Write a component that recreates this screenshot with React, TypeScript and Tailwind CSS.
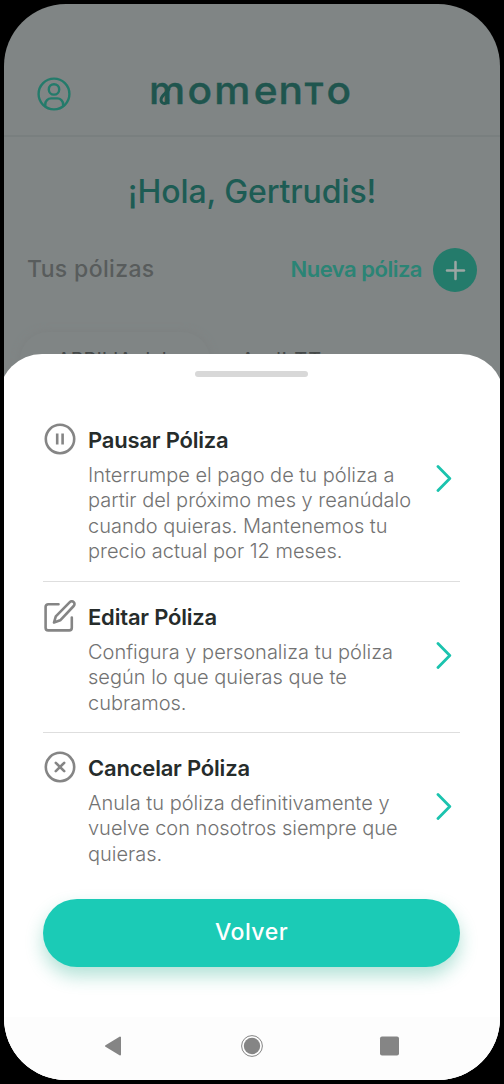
import type { ReactNode } from 'react';
import { Plus } from 'lucide-react';

interface PolicyAction {
  id: string;
  title: string;
  lines: string[];
  icon: ReactNode;
  className: string;
}

const iconProps = {
  width: 32,
  height: 32,
  viewBox: '0 0 32 32',
  fill: 'none',
  stroke: '#858585',
  strokeWidth: 2.6,
  strokeLinecap: 'round' as const,
  strokeLinejoin: 'round' as const,
};

const PauseIcon = () => (
  <svg {...iconProps}>
    <circle cx="16" cy="16" r="14.2" />
    <path d="M13.2 10.6v10.8M18.6 10.6v10.8" strokeLinecap="butt" />
  </svg>
);

const EditIcon = () => (
  <svg {...iconProps}>
    <path d="M14.5 4.2H4.2a2.6 2.6 0 0 0-2.6 2.6v21a2.6 2.6 0 0 0 2.6 2.6h21a2.6 2.6 0 0 0 2.6-2.6V17.5" />
    <path d="M25.8 2.1a2.7 2.7 0 0 1 3.9 3.9L16.2 20.3l-6.2 2.2 1.8-6.2z" />
  </svg>
);

const CancelIcon = () => (
  <svg {...iconProps}>
    <circle cx="16" cy="16" r="14.2" />
    <path d="M11.8 11.8l8.4 8.4M20.2 11.8l-8.4 8.4" />
  </svg>
);

const UserIcon = () => (
  <svg width="34" height="34" viewBox="0 0 34 34" fill="none" stroke="#247b6b" strokeWidth="2.4">
    <circle cx="17" cy="17" r="15.4" />
    <circle cx="17" cy="12.4" r="5.2" />
    <path d="M8.3 29.4v-2.2a5.8 5.8 0 0 1 5.8-5.8h6.2a5.8 5.8 0 0 1 5.8 5.8v2.2" />
  </svg>
);

// Letters are placed one by one because of the wide wordmark spacing
const Logo = () => (
  <svg
    width="214"
    height="58"
    viewBox="0 0 214 58"
    fill="#1f554e"
    stroke="#1f554e"
    strokeWidth="0.4"
    fontFamily="Inter, sans-serif"
    fontWeight="500"
  >
    <g transform="translate(0 41) scale(1.07 1)">
      <text fontSize="38" x="-1 35 60 97 120">momen</text>
      <text fontSize="28.500" strokeWidth="1" x="144">T</text>
      <text fontSize="38" x="165">o</text>
    </g>
    <path d="M19 26c-2 4-8 6-8 11a3.400 3.400 0 0 0 6.800 0" fill="none" strokeWidth="3" strokeLinecap="round" />
  </svg>
);

const actions: PolicyAction[] = [
  {
    id: 'pausar',
    title: 'Pausar Póliza',
    lines: [
      'Interrumpe el pago de tu póliza a',
      'partir del próximo mes y reanúdalo',
      'cuando quieras. Mantenemos tu',
      'precio actual por 12 meses.',
    ],
    icon: <PauseIcon />,
    className: 'h-[158px]',
  },
  {
    id: 'editar',
    title: 'Editar Póliza',
    lines: ['Configura y personaliza tu póliza', 'según lo que quieras que te', 'cubramos.'],
    icon: <EditIcon />,
    className: 'h-[151px] border-t border-[#dedede] pt-[18px]',
  },
  {
    id: 'cancelar',
    title: 'Cancelar Póliza',
    lines: ['Anula tu póliza definitivamente y', 'vuelve con nosotros siempre que', 'quieras.'],
    icon: <CancelIcon />,
    className: 'h-[167px] border-t border-[#dedede] pt-[18px]',
  },
];

function ActionRow({ action }: { action: PolicyAction }) {
  return (
    <button className={`flex w-full items-start text-left ${action.className}`}>
      <span className="mr-3 w-8 shrink-0 pl-px">{action.icon}</span>
      <span className="flex-1 pl-px">
        <span className="block h-[45px] pt-[2px] text-[22px] leading-[30px] font-semibold tracking-[-0.2px] text-[#262c2b]">
          {action.title}
        </span>
        <span className="-mt-[5px] block text-[20px] leading-[25.3px] font-light whitespace-nowrap text-[#727272]">
          {action.lines.map((line) => (
            <span key={line} className="block">
              {line}
            </span>
          ))}
        </span>
      </span>
      <svg className="mt-[41px] mr-2 shrink-0" width="16" height="28" viewBox="0 0 16 28" fill="none">
        <path d="M2 2.5L13.8 14.5L2 26.5" stroke="#1bc3ae" strokeWidth="2.8" strokeLinecap="round" strokeLinejoin="round" />
      </svg>
    </button>
  );
}

export default function App() {
  return (
    <div className="h-[1084px] w-[504px] overflow-hidden bg-black p-1 font-['Inter',sans-serif]">
      <div className="flex h-[1076px] flex-col overflow-hidden rounded-[62px] bg-[#808585]">
        <div className="h-[350px] shrink-0">
          <header className="flex h-[133px] items-start border-b-2 border-[#797f7f] pt-[59px] pl-[33px]">
            <div className="mt-[14px]">
              <UserIcon />
            </div>
            <div className="ml-[79px]">
              <Logo />
            </div>
          </header>
          <h1 className="mt-[35px] text-center text-[32px] leading-10 font-medium tracking-[-0.1px] text-[#1d5c54]">
            ¡Hola, Gertrudis!
          </h1>
          <div className="mt-9 flex h-[44px] items-center px-[23px]">
            <h2 className="mb-[2px] text-[23px] font-medium tracking-[0.35px] text-[#585c5c]">Tus pólizas</h2>
            <span className="mr-[11px] mb-[2px] ml-auto text-[22px] font-semibold tracking-[-0.5px] text-[#2b8475]">
              Nueva póliza
            </span>
            <button className="flex size-11 items-center justify-center rounded-full bg-[#247b6b] text-[#9ca6a4]">
              <Plus size={29} strokeWidth={2.1} />
            </button>
          </div>
          {/* policy card, mostly hidden behind the sheet */}
          <div className="mt-[40px] ml-4 flex h-20 w-[190px] rounded-[28px] pt-[16px] pl-[37px] text-[20px] leading-6 whitespace-nowrap text-[#454949] shadow-[0_0_8px_#7c8181]">
            <span className="w-[184px] shrink-0">APRILIA del</span>
            <span className="tracking-[1px]">Audi TT</span>
          </div>
        </div>

        <div className="relative -mr-1 -ml-[5px] flex flex-1 flex-col rounded-t-[43px] bg-white">
          <div className="mx-auto mt-[17px] h-[6px] w-[113px] shrink-0 rounded-full bg-[#d8d8d8]" />
          <div className="mt-[46px] px-11">
            {actions.map((action) => (
              <ActionRow key={action.id} action={action} />
            ))}
            <button className="block h-[68px] w-full rounded-full bg-[#1bcbb6] pb-0.5 text-[23px] font-medium tracking-[0.5px] text-white shadow-[0_9px_18px_#1aa98755]">
              Volver
            </button>
          </div>
          <nav className="mt-auto flex h-[63px] shrink-0 bg-[#fdfdfd] pt-[16px] pl-[105px]">
            <svg width="306" height="26" viewBox="0 0 306 26" fill="#858585">
              <path d="M2 13L16 4.5v17z" stroke="#858585" strokeWidth="2" strokeLinejoin="round" />
              <circle cx="148" cy="13" r="8.2" />
              <circle cx="148" cy="13" r="10.4" fill="none" stroke="#858585" strokeWidth="1" />
              <rect x="276" y="3.5" width="19" height="19" rx="2" />
            </svg>
          </nav>
        </div>
      </div>
    </div>
  );
}
